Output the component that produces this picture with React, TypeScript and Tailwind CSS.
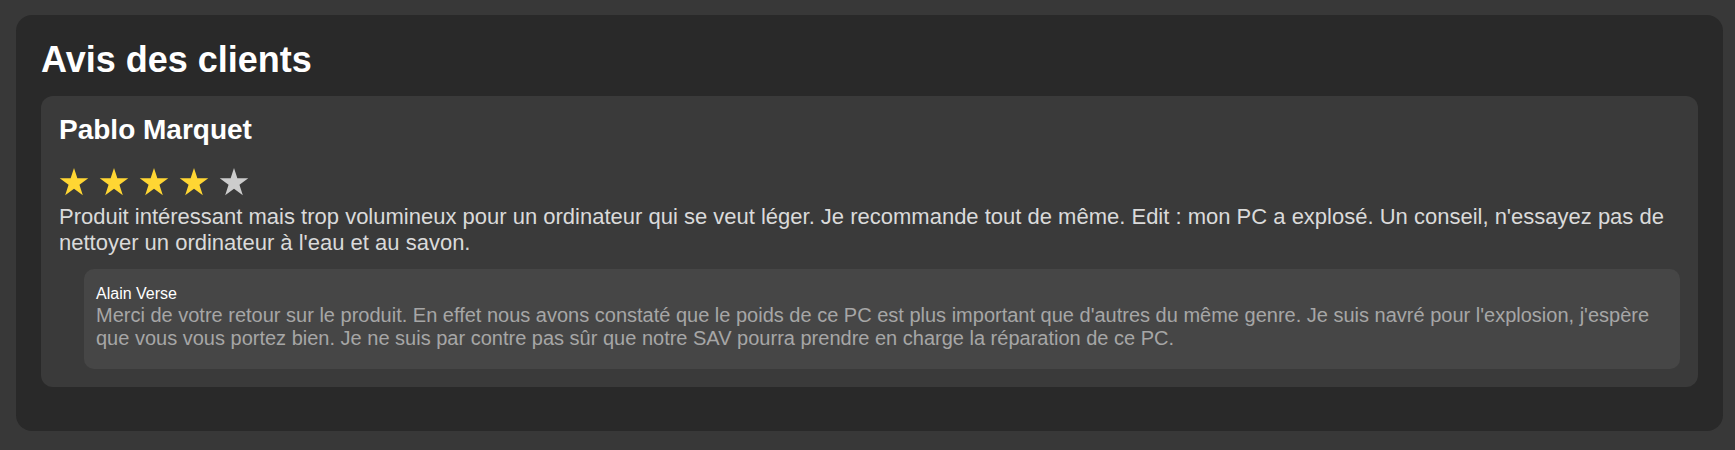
type Review = {
  author: string
  rating: number
  text: string
  reply?: { author: string; text: string }
}

const reviews: Review[] = [
  {
    author: 'Pablo Marquet',
    rating: 4,
    text: "Produit intéressant mais trop volumineux pour un ordinateur qui se veut léger. Je recommande tout de même. Edit : mon PC a explosé. Un conseil, n'essayez pas de nettoyer un ordinateur à l'eau et au savon.",
    reply: {
      author: 'Alain Verse',
      text: "Merci de votre retour sur le produit. En effet nous avons constaté que le poids de ce PC est plus important que d'autres du même genre. Je suis navré pour l'explosion, j'espère que vous vous portez bien. Je ne suis par contre pas sûr que notre SAV pourra prendre en charge la réparation de ce PC.",
    },
  },
]

// regular 5-point star, outer radius 15, inner 5.73
const starPoints = Array.from({ length: 10 }, (_, i) => {
  const r = i % 2 === 0 ? 15 : 5.73
  const a = (Math.PI / 5) * i - Math.PI / 2
  return `${(15 + r * Math.cos(a)).toFixed(2)},${(15 + r * Math.sin(a)).toFixed(2)}`
}).join(' ')

function Star({ filled }: { filled: boolean }) {
  return (
    <svg width="30" height="28" viewBox="0 0 30 28" aria-hidden="true" className="block">
      <polygon points={starPoints} fill={filled ? '#ffd633' : '#cccccc'} />
    </svg>
  )
}

function Stars({ rating }: { rating: number }) {
  return (
    <div className="flex gap-[10px] mt-[22px] mb-[8px]">
      {[1, 2, 3, 4, 5].map((n) => (
        <Star key={n} filled={n <= rating} />
      ))}
    </div>
  )
}

function ReviewCard({ review }: { review: Review }) {
  return (
    <div className="bg-[#3a3a3a] rounded-xl p-[18px]">
      <h3 className="text-[28px] leading-[normal] font-bold text-white">{review.author}</h3>
      <Stars rating={review.rating} />
      <p className="text-[22px] leading-[normal] text-[#dadada]">{review.text}</p>
      {review.reply && (
        <div className="mt-[13px] ml-[25px] bg-[#464646] rounded-[10px] px-3 pt-4 pb-[19px]">
          <div className="text-base leading-[normal] text-white">{review.reply.author}</div>
          <p className="mt-px text-xl leading-[normal] text-[#a6a6a6]">{review.reply.text}</p>
        </div>
      )}
    </div>
  )
}

export default function App() {
  return (
    <div
      className="min-h-screen bg-[#383838] pt-[15px] pl-4 pr-3 pb-4"
      style={{ fontFamily: '"Liberation Sans", Arial, sans-serif' }}
    >
      <section className="bg-[#292929] rounded-2xl px-[25px] pt-6 pb-[44px]">
        <h2 className="text-4xl leading-[normal] font-bold text-white mb-[15px]">Avis des clients</h2>
        <div className="flex flex-col gap-5">
          {reviews.map((r) => (
            <ReviewCard key={r.author} review={r} />
          ))}
        </div>
      </section>
    </div>
  )
}
